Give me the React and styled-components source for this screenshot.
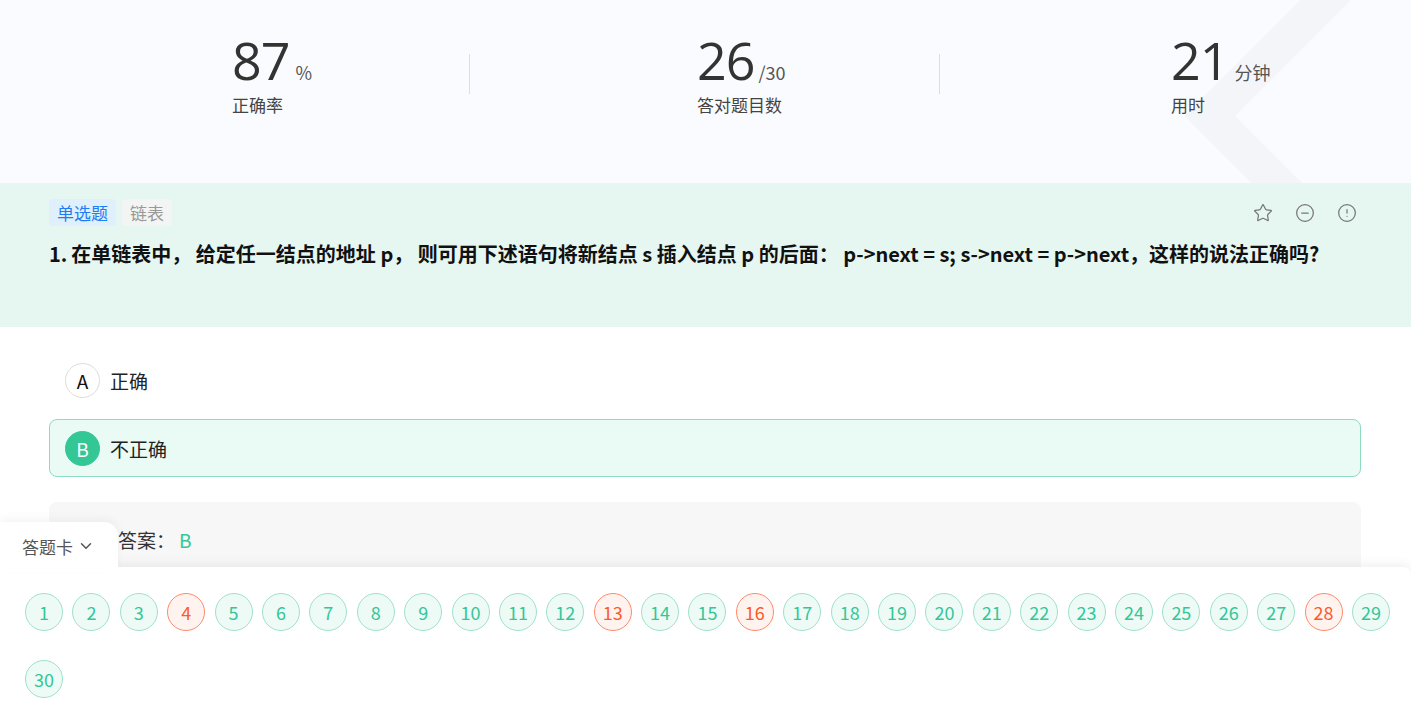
import React from 'react';
import styled, { createGlobalStyle } from 'styled-components';
import { Star, MinusCircle, AlertCircle, ChevronDown } from 'lucide-react';

const Global = createGlobalStyle`
  body { margin: 0; font-family: "Noto Sans CJK SC", "Noto Sans", sans-serif; background: #fff; overflow: hidden; }
`;

const Page = styled.div`
  width: 1411px;
  height: 722px;
  position: relative;
  overflow: hidden;
`;

const Hero = styled.div`
  height: 183px;
  background: #fafbfe;
  display: grid;
  grid-template-columns: 470px 470px 471px;
  padding-top: 34px;
  box-sizing: border-box;
  position: relative;
  overflow: hidden;
`;

const Deco = styled.div`
  position: absolute;
  right: -150px;
  top: -40px;
  width: 240px;
  height: 240px;
  border: 36px solid #f4f5f9;
  transform: rotate(45deg);
`;

const Stat = styled.div`
  border-right: ${p => (p.$div ? '1px solid #dcdde2' : 'none')};
  height: 40px;
  margin-top: 20px;
  position: relative;
`;

const StatInner = styled.div`
  position: absolute;
  top: -20px;
  left: ${p => p.$left}px;
  color: #333;
`;

const Big = styled.span`
  font-family: "Open Sans", sans-serif;
  font-size: 52px;
  line-height: 52px;
  font-weight: 500;
  letter-spacing: -1px;
`;

const Unit = styled.span`
  font-size: 18px;
  color: #555;
  margin-left: 6px;
`;

const Label = styled.div`
  font-size: 17px;
  color: #444;
  margin-top: 6px;
`;

const Question = styled.div`
  background: #e6f6f1;
  height: 144px;
  padding: 16px 48px 0 49px;
  box-sizing: border-box;
`;

const TagRow = styled.div`
  display: flex;
  gap: 6px;
  align-items: center;
`;

const Tag = styled.span`
  font-size: 17px;
  padding: 1px 8px;
  border-radius: 4px;
  color: ${p => (p.$blue ? '#1f7cf2' : '#999')};
  background: ${p => (p.$blue ? '#dff0fc' : '#f2f5f4')};
`;

const Icons = styled.div`
  margin-left: auto;
  display: flex;
  gap: 22px;
  color: #777;
  margin-right: 6px;
`;

const QText = styled.div`
  margin-top: 8px;
  font-size: 20px;
  font-weight: bold;
  line-height: 40px;
  color: #111;
  display: flex;
  gap: 4px;
  padding-right: 6px;
`;

const Body = styled.div`
  padding: 24px 50px 0 49px;
`;

const Option = styled.div`
  display: flex;
  align-items: center;
  gap: 10px;
  height: 56px;
  padding: 0 15px;
  margin-bottom: 10px;
  border-radius: 8px;
  border: 1px solid ${p => (p.$sel ? '#8edcbd' : 'transparent')};
  background: ${p => (p.$sel ? '#eafaf4' : 'transparent')};
  font-size: 19px;
  color: #222;
`;

const Letter = styled.span`
  width: 35px;
  height: 35px;
  border-radius: 50%;
  display: flex;
  align-items: center;
  justify-content: center;
  border: 1px solid ${p => (p.$sel ? '#33c796' : '#ddd')};
  background: ${p => (p.$sel ? '#33c796' : '#fff')};
  color: ${p => (p.$sel ? '#fff' : '#111')};
  box-sizing: border-box;
  font-size: 19px;
`;

const Answer = styled.div`
  margin-top: 25px;
  background: #f7f7f7;
  border-radius: 8px;
  height: 80px;
  padding: 24px 69px;
  box-sizing: border-box;
  font-size: 19px;
  color: #333;
  & b { color: #33c796; font-weight: normal; margin-left: 4px; }
`;

const Card = styled.div`
  position: absolute;
  left: 0;
  bottom: 0;
  width: 1411px;
  height: 155px;
  background: #fff;
  box-shadow: 0 -4px 10px rgba(0,0,0,0.05);
  border-radius: 0 8px 0 0;
`;

const CardTab = styled.div`
  position: absolute;
  left: 0;
  top: -45px;
  width: 118px;
  height: 50px;
  background: #fff;
  border-radius: 0 14px 0 0;
  box-shadow: 0 -4px 8px rgba(0,0,0,0.04);
  display: flex;
  align-items: flex-start;
  padding: 12px 0 0 22px;
  box-sizing: border-box;
  gap: 4px;
  font-size: 17px;
  color: #555;
`;

const Grid = styled.div`
  display: flex;
  flex-wrap: wrap;
  column-gap: 9.4px;
  row-gap: 29px;
  padding: 26px 0 0 25px;
  position: relative;
`;

const Num = styled.span`
  width: 38px;
  height: 38px;
  border-radius: 50%;
  box-sizing: border-box;
  display: flex;
  align-items: center;
  justify-content: center;
  font-size: 18px;
  border: 1px solid ${p => (p.$wrong ? '#ff8a6a' : '#9de3c8')};
  background: ${p => (p.$wrong ? '#fff3ef' : '#eefaf6')};
  color: ${p => (p.$wrong ? '#fb5a2a' : '#33c796')};
`;

const wrong = [4, 13, 16, 28];

export default function App() {
  return (
    <Page>
      <Global />
      <Hero>
        <Deco />
        <Stat $div>
          <StatInner $left={232}>
            <Big>87</Big><Unit>%</Unit>
            <Label>正确率</Label>
          </StatInner>
        </Stat>
        <Stat $div>
          <StatInner $left={227}>
            <Big>26</Big><Unit style={{ marginLeft: 4 }}>/30</Unit>
            <Label>答对题目数</Label>
          </StatInner>
        </Stat>
        <Stat>
          <StatInner $left={231}>
            <Big>21</Big><Unit>分钟</Unit>
            <Label>用时</Label>
          </StatInner>
        </Stat>
      </Hero>
      <Question>
        <TagRow>
          <Tag $blue>单选题</Tag>
          <Tag>链表</Tag>
          <Icons>
            <Star size={20} strokeWidth={1.5} />
            <MinusCircle size={20} strokeWidth={1.5} />
            <AlertCircle size={20} strokeWidth={1.5} />
          </Icons>
        </TagRow>
        <QText>
          <span>1.</span>
          <span>在单链表中， 给定任一结点的地址 p， 则可用下述语句将新结点 s 插入结点 p 的后面： p-&gt;next = s; s-&gt;next = p-&gt;next，这样的说法正确吗?</span>
        </QText>
      </Question>
      <Body>
        <Option><Letter>A</Letter>正确</Option>
        <Option $sel><Letter $sel>B</Letter>不正确</Option>
        <Answer>答案：<b>B</b></Answer>
      </Body>
      <Card>
        <CardTab>答题卡 <ChevronDown size={18} style={{ marginTop: 3 }} /></CardTab>
        <Grid>
          {Array.from({ length: 30 }, (_, i) => (
            <Num key={i} $wrong={wrong.includes(i + 1)}>{i + 1}</Num>
          ))}
        </Grid>
      </Card>
    </Page>
  );
}
